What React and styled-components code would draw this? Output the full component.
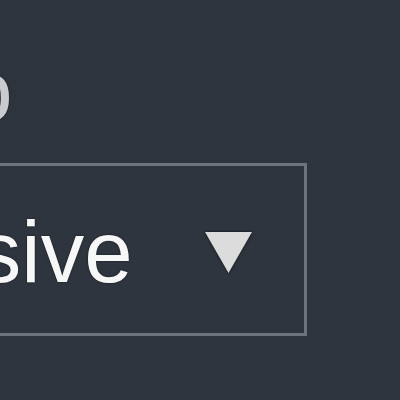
import React from "react"
import styled, { createGlobalStyle } from "styled-components"

const GlobalStyle = createGlobalStyle`
  html, body {
    margin: 0;
    background: #2e343e;
  }
  body {
    font-family: "Liberation Sans", Arial, sans-serif;
  }
`

const Page = styled.div`
  width: 400px;
  height: 400px;
  overflow: hidden;
  padding-top: 47px;
  box-sizing: border-box;
  background: #2e343e;
`

const Field = styled.div`
  display: flex;
  flex-direction: column;
  gap: 28px;
  margin-left: -360px;
  width: 667px;
`

const Label = styled.label`
  display: block;
  padding-left: 138px;
  font-size: 88px;
  line-height: 1;
  color: #c9cbce;
  text-shadow: 0 0 2px #14171c;
  white-space: nowrap;
`

const SelectBox = styled.div`
  display: flex;
  align-items: center;
  justify-content: space-between;
  height: 173px;
  box-sizing: border-box;
  border: 3px solid #6e737b;
  padding: 0 52px 0 35px;
  background: #2f353f;
`

const Value = styled.span`
  font-size: 87px;
  line-height: 1;
  padding-top: 4px;
  color: #f7f7f7;
  text-shadow: 0 0 2px #111317;
  white-space: nowrap;
`

const Caret = styled.svg`
  width: 47px;
  height: 41px;
  margin-top: 6px;
  flex-shrink: 0;
  filter: drop-shadow(0 0 1.5px #0d0f12);
`

export default function App() {
  return (
    <>
      <GlobalStyle />
      <Page>
        <Field>
          <Label>Demo</Label>
          <SelectBox>
            <Value>Responsive</Value>
            <Caret viewBox="0 0 47 41">
              <polygon points="0,0 47,0 23.5,41" fill="#dcdcdc" />
            </Caret>
          </SelectBox>
        </Field>
      </Page>
    </>
  )
}
